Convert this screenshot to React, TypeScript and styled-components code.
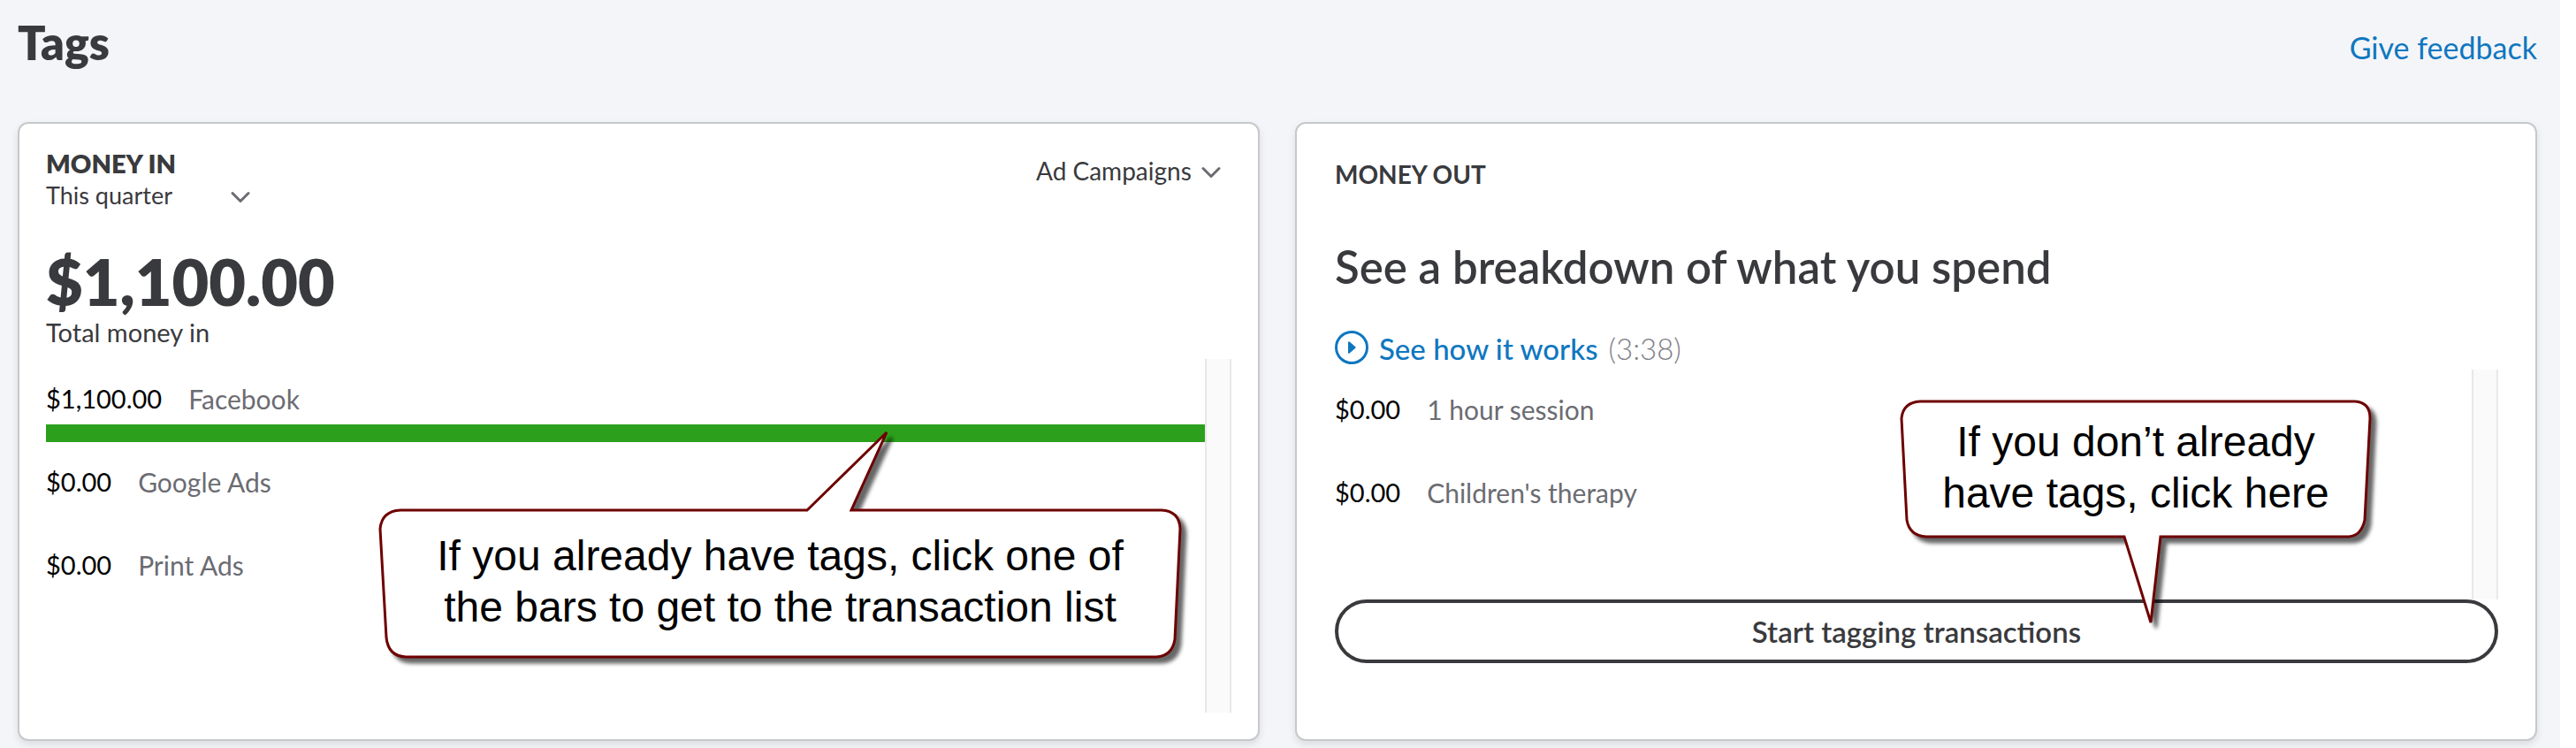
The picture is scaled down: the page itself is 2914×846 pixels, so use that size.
import React from "react";
import styled, { createGlobalStyle } from "styled-components";

const ink = "#393a3d";
const blue = "#0f77c0";

const GlobalStyle = createGlobalStyle`
  *, *::before, *::after { box-sizing: border-box; }
  body {
    margin: 0;
    background: #fff;
    color: ${ink};
    font-family: Lato, "Open Sans", sans-serif;
    font-variant-ligatures: none;
  }
  h1, h2, h3, p, ul { margin: 0; padding: 0; }
  ul { list-style: none; }
`;

const Page = styled.main`
  min-height: 100vh;
  margin-right: 18px;
  padding: 16px 26px 8px 20px;
  background: #f4f5f8;
`;

const PageHeader = styled.header`
  display: flex;
  align-items: flex-end;
  justify-content: space-between;
  margin-bottom: 58px;
`;

const PageTitle = styled.h1`
  font-size: 52px;
  font-weight: 800;
  line-height: 64px;
`;

const FeedbackLink = styled.a`
  color: ${blue};
  font-size: 34px;
  line-height: 52px;
  text-decoration: none;
`;

const Cards = styled.div`
  display: grid;
  grid-template-columns: 1fr 1fr;
  gap: 40px;
`;

const Card = styled.section<{ $pad: string }>`
  position: relative;
  display: flex;
  flex-direction: column;
  padding: ${(p) => p.$pad};
  background: #fff;
  border: 2px solid #c7c8ca;
  border-radius: 12px;
  box-shadow: 0 4px 8px rgba(0, 0, 0, 0.1);
`;

const CardHeader = styled.div`
  display: flex;
  align-items: flex-start;
  justify-content: space-between;
  margin-bottom: 39px;
`;

const CardLabel = styled.h2<{ $strong?: boolean }>`
  font-size: ${(p) => (p.$strong ? 29 : 28)}px;
  font-weight: ${(p) => (p.$strong ? 800 : 700)};
  line-height: 36px;
`;

const Picker = styled.div<{ $width: number; $size: number }>`
  display: grid;
  align-items: center;
  width: ${(p) => p.$width}px;
  font-size: ${(p) => p.$size}px;

  select, svg { grid-area: 1 / 1; }

  select {
    width: 100%;
    height: 36px;
    padding: 0;
    border: 0;
    appearance: none;
    background: transparent;
    color: inherit;
    font: inherit;
    line-height: 36px;
  }

  svg {
    justify-self: end;
    margin-top: 4px;
    pointer-events: none;
  }
`;

const CategoryPicker = styled.div`
  padding: 8px 12px 0 0;
`;

const Total = styled.p`
  font-size: 72px;
  font-weight: 800;
  line-height: 80px;
`;

const TotalCaption = styled.p`
  margin-bottom: 12px;
  font-size: 29px;
  line-height: 36px;
`;

const Headline = styled.h3`
  margin: 55px 0 40px;
  font-size: 51px;
  font-weight: 600;
  line-height: 64px;
`;

const VideoRow = styled.div`
  display: flex;
  gap: 12px;
  margin-bottom: 4px;
  font-size: 33px;
  line-height: 40px;
`;

const VideoLink = styled.a`
  display: flex;
  gap: 12px;
  color: ${blue};
  font-weight: 500;
  text-decoration: none;
`;

const Duration = styled.span`
  color: #7d8086;
  font-weight: 300;
`;

const ScrollArea = styled.div<{ $height: number }>`
  display: flex;
  min-height: ${(p) => p.$height}px;
`;

const TagList = styled.ul`
  flex: 1;
`;

const ScrollTrack = styled.div`
  width: 30px;
  background: #fafafa;
  border: solid #e8e8e8;
  border-width: 0 2px;
`;

const TagRow = styled.li`
  display: flex;
  flex-direction: column;
  gap: 11px;
  padding-top: 27px;
`;

const TagText = styled.div`
  display: flex;
  gap: 30px;
  line-height: 36px;
`;

const Amount = styled.span`
  color: #000;
  font-size: 29px;
  font-weight: 400;
`;

const TagName = styled.span`
  color: #6b6c72;
  font-size: 30px;
`;

const Bar = styled.button`
  height: 20px;
  padding: 0;
  border: 0;
  background: #2ca01c;
  cursor: pointer;
`;

const StartButton = styled.button`
  height: 72px;
  border: 4px solid ${ink};
  border-radius: 36px;
  background: #fff;
  color: ${ink};
  font-family: inherit;
  font-size: 33px;
  font-weight: 600;
  line-height: 40px;
  cursor: pointer;
`;

const Callout = styled.aside<{ $left: number; $top: number }>`
  position: absolute;
  left: ${(p) => p.$left}px;
  top: ${(p) => p.$top}px;
  pointer-events: none;

  svg {
    display: block;
    overflow: visible;
    filter: drop-shadow(6px 6px 2px rgba(0, 0, 0, 0.6));
  }
`;

const CalloutText = styled.p<{ $top: number }>`
  position: absolute;
  top: ${(p) => p.$top}px;
  left: 0;
  width: 100%;
  color: #000;
  font-family: "Liberation Sans", Arial, sans-serif;
  font-size: 48px;
  line-height: 58px;
  text-align: center;
  white-space: nowrap;
`;

const Chevron = () => (
  <svg width="22" height="14" viewBox="0 0 22 14" fill="none" stroke="#6b6c72" strokeWidth="3" strokeLinecap="round" strokeLinejoin="round" aria-hidden="true">
    <path d="M2 2.5 11 11.5 20 2.5" />
  </svg>
);

const PlayIcon = () => (
  <svg width="38" height="38" viewBox="0 0 38 38" fill="none" aria-hidden="true">
    <circle cx="19" cy="19" r="17.5" stroke={blue} strokeWidth="3" />
    <path d="M16 13.2 22.6 19 16 24.8Z" fill={blue} stroke={blue} strokeWidth="2" strokeLinejoin="round" />
  </svg>
);

type Tag = { name: string; amount: number };

const moneyIn: Tag[] = [
  { name: "Facebook", amount: 1100 },
  { name: "Google Ads", amount: 0 },
  { name: "Print Ads", amount: 0 },
];

const moneyOut: Tag[] = [
  { name: "1 hour session", amount: 0 },
  { name: "Children's therapy", amount: 0 },
];

const dollars = (n: number) => n.toLocaleString("en-US", { style: "currency", currency: "USD" });

function Tags({ tags, height }: { tags: Tag[]; height: number }) {
  const max = Math.max(...tags.map((t) => t.amount), 1);
  return (
    <ScrollArea $height={height}>
      <TagList>
        {tags.map((t) => (
          <TagRow key={t.name}>
            <TagText>
              <Amount>{dollars(t.amount)}</Amount>
              <TagName>{t.name}</TagName>
            </TagText>
            <Bar type="button" aria-label={`${t.name} transactions`} style={{ width: `${(t.amount / max) * 100}%` }} />
          </TagRow>
        ))}
      </TagList>
      <ScrollTrack />
    </ScrollArea>
  );
}

export default function App() {
  return (
    <>
      <GlobalStyle />
      <Page>
        <PageHeader>
          <PageTitle>Tags</PageTitle>
          <FeedbackLink href="#feedback">Give feedback</FeedbackLink>
        </PageHeader>
        <Cards>
          <Card $pad="27px 30px 30px">
            <CardHeader>
              <div>
                <CardLabel $strong>MONEY IN</CardLabel>
                <Picker $width={231} $size={27}>
                  <select aria-label="Period">
                    <option>This quarter</option>
                  </select>
                  <Chevron />
                </Picker>
              </div>
              <CategoryPicker>
                <Picker $width={209} $size={28}>
                  <select aria-label="Tag group">
                    <option>Ad Campaigns</option>
                  </select>
                  <Chevron />
                </Picker>
              </CategoryPicker>
            </CardHeader>
            <Total>$1,100.00</Total>
            <TotalCaption>Total money in</TotalCaption>
            <Tags tags={moneyIn} height={400} />
            <Callout $left={403} $top={345}>
              <svg width="915" height="262" viewBox="0 0 915 262" fill="#fff" stroke="#6e0000" strokeWidth="3">
                <path d="M28 92H488L578 4 538 92H889Q909 93 910 113L904 238Q901 257 883 258H34Q14 257 12 236L5 113Q7 93 28 92Z" />
              </svg>
              <CalloutText $top={115}>
                If you already have tags, click one of
                <br />
                the bars to get to the transaction list
              </CalloutText>
            </Callout>
          </Card>
          <Card $pad="39px 42px 30px 43px">
            <CardLabel>MONEY OUT</CardLabel>
            <Headline>See a breakdown of what you spend</Headline>
            <VideoRow>
              <VideoLink href="#video">
                <PlayIcon />
                See how it works
              </VideoLink>
              <Duration>(3:38)</Duration>
            </VideoRow>
            <Tags tags={moneyOut} height={260} />
            <StartButton type="button">Start tagging transactions</StartButton>
            <Callout $left={678} $top={309}>
              <svg width="542" height="258" viewBox="0 0 542 258" fill="#fff" stroke="#6e0000" strokeWidth="3">
                <path d="M27 5H519Q536 6 536 24L530 139Q526 157 512 158H299L288 255 258 158H34Q15 157 12 139L6 24Q8 6 27 5Z" />
              </svg>
              <CalloutText $top={22}>
                If you don’t already
                <br />
                have tags, click here
              </CalloutText>
            </Callout>
          </Card>
        </Cards>
      </Page>
    </>
  );
}
